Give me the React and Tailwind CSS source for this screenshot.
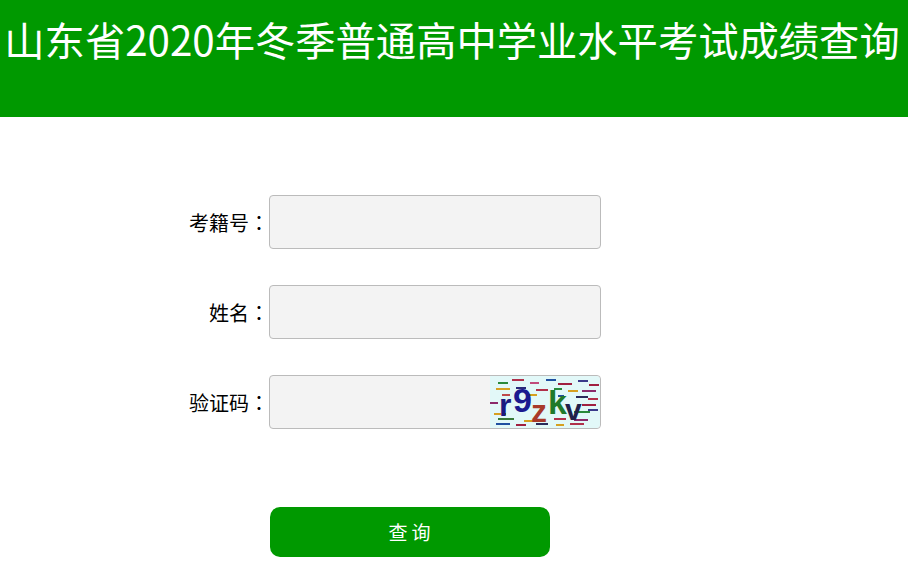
const FONT = "font-['Microsoft_YaHei','Noto_Sans_CJK_SC',sans-serif]";

// short noise dashes behind the captcha letters: x, y, length, colour
const NOISE = [
  [8, 7, 10, "#2a8a3a"], [22, 4, 12, "#b0304a"], [40, 7, 9, "#c04a7a"], [56, 4, 10, "#1f4fa0"], [68, 8, 14, "#a02040"],
  [88, 5, 10, "#3a3a8a"], [99, 9, 10, "#a02040"], [6, 13, 14, "#d6a020"], [26, 12, 10, "#2a2a7a"], [46, 14, 12, "#b0304a"],
  [64, 13, 8, "#2a8a3a"], [78, 15, 10, "#d6a020"], [92, 15, 14, "#8a2a6a"], [12, 19, 8, "#c04a4a"], [38, 19, 9, "#d6a020"],
  [68, 20, 6, "#1f4fa0"], [86, 21, 12, "#2a2a5a"], [98, 23, 10, "#b0304a"], [0, 27, 8, "#8a2a6a"],
  [92, 29, 14, "#a02040"], [4, 38, 12, "#d6a020"], [84, 36, 16, "#2a8a3a"], [98, 34, 10, "#3a3a8a"],
  [8, 43, 16, "#3a7a3a"], [34, 45, 12, "#d6a020"], [64, 43, 12, "#b0304a"], [84, 44, 14, "#8a2a6a"],
  [6, 48, 14, "#1f4fa0"], [26, 49, 10, "#a02040"], [46, 48, 12, "#2a2a5a"], [66, 49, 8, "#d6a020"], [80, 48, 14, "#b0304a"],
];

function Captcha() {
  return (
    <svg width="110" height="52" viewBox="0 0 110 52" className="absolute right-px top-px rounded-r-[4px]">
      <rect width="110" height="52" fill="#e2f8f8" />
      <g strokeWidth="2">
        {NOISE.map(([x, y, len, color], i) => (
          <line key={i} x1={x} y1={y} x2={x + len} y2={y} stroke={color} />
        ))}
      </g>
      <text x="9" y="40" fontSize="32" fontWeight="bold" fill="#1a1a80" fontFamily="Liberation Sans">r</text>
      <text x="23" y="36" fontSize="34" fontWeight="bold" fill="#1a1a90" fontFamily="Liberation Sans">9</text>
      <text x="41" y="46" fontSize="32" fontWeight="bold" fill="#a83a2a" fontFamily="Liberation Sans">z</text>
      <text x="58" y="38" fontSize="34" fontWeight="bold" fill="#1f7a2a" fontFamily="Liberation Sans">k</text>
      <text x="75" y="44" fontSize="30" fontWeight="bold" fill="#20204a" fontFamily="Liberation Sans">v</text>
    </svg>
  );
}

function Row({ label, children }) {
  return (
    <div className="flex items-center h-[54px] mb-9">
      <label className="w-[269px] pt-0.5 text-right text-[20px] text-black">
        {label}
        <span className="font-['Noto_Sans_CJK_TC',sans-serif]">：</span>
      </label>
      <div className="relative w-[332px] h-[54px]">
        <input className="w-full h-full bg-[#f3f3f3] border border-[#bbbbbb] rounded-[4px]" />
        {children}
      </div>
    </div>
  );
}

export default function App() {
  return (
    <div className={`min-h-[583px] bg-white ${FONT}`}>
      <div className="h-[117px] bg-[#009900] pr-1 text-center overflow-hidden">
        <h1 className="text-[40.3px] leading-[78px] text-white whitespace-nowrap font-normal">山东省2020年冬季普通高中学业水平考试成绩查询</h1>
      </div>
      <div className="pt-[78px]">
        <Row label="考籍号" />
        <Row label="姓名" />
        <Row label="验证码">
          <Captcha />
        </Row>
        <div className="pl-[270px] pt-[42px]">
          <button className="w-[280px] h-[50px] bg-[#009900] rounded-[10px] pl-[3px] text-white text-[19px] tracking-[4px]">查询</button>
        </div>
      </div>
    </div>
  );
}
